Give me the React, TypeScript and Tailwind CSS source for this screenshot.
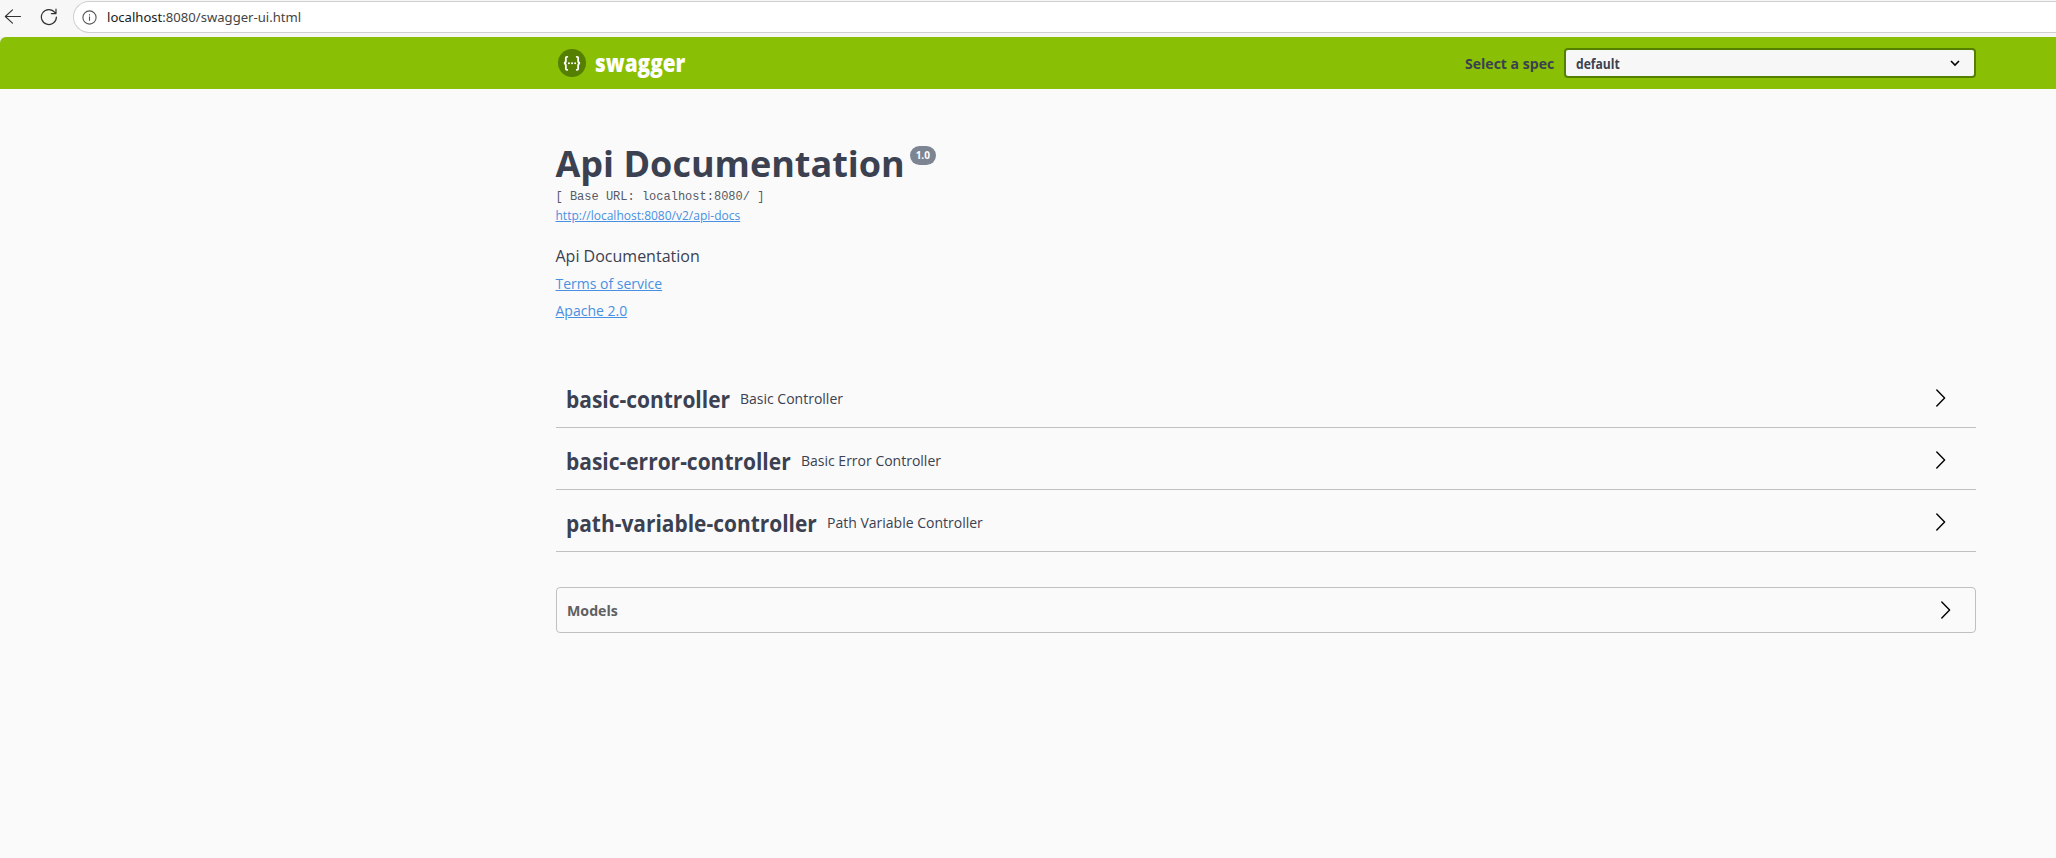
import React from "react";

const tags = [
  { name: "basic-controller", description: "Basic Controller", width: 164 },
  { name: "basic-error-controller", description: "Basic Error Controller", width: 225 },
  { name: "path-variable-controller", description: "Path Variable Controller", width: 251 },
];

/** Bold headline text squeezed or stretched to a fixed width. */
function Fitted({ text, width, className }: { text: string; width: number; className: string }) {
  const ref = React.useRef<HTMLSpanElement>(null);
  const [scale, setScale] = React.useState(1);
  React.useLayoutEffect(() => {
    if (ref.current) setScale(width / ref.current.offsetWidth);
  }, [width]);
  return (
    <span className="block shrink-0 whitespace-nowrap" style={{ width }}>
      <span
        ref={ref}
        className={`inline-block origin-left ${className}`}
        style={{ transform: `scaleX(${scale})` }}
      >
        {text}
      </span>
    </span>
  );
}

function Chevron() {
  return (
    <svg width="10" height="18" viewBox="0 0 10 18" fill="none" stroke="#000" strokeWidth="1.4" strokeLinecap="round" strokeLinejoin="round">
      <path d="M0.8 1 L8.6 9 L0.8 17" />
    </svg>
  );
}

function BrowserBar() {
  return (
    <div className="flex h-[37px] items-start bg-[#f7f7f7]">
      <svg className="ml-[4px] mt-[8px]" width="18" height="17" viewBox="0 0 18 17" fill="none" stroke="#333" strokeWidth="1.1" strokeLinecap="round" strokeLinejoin="round">
        <path d="M16.5 8.5H1.3M8.5 1.8L1.3 8.5L8.5 15.2" />
      </svg>
      <svg className="ml-[18px] mt-[8px]" width="18" height="18" viewBox="0 0 18 18" fill="none" stroke="#333" strokeWidth="1.2" strokeLinecap="round" strokeLinejoin="round">
        <path d="M16.4 9A7.5 7.5 0 1 1 14.8 4.4L15.6 5.4M16 1.2V5.6H11.4" />
      </svg>
      <div className="ml-[15px] mt-px flex h-8 flex-1 items-center rounded-l-full border border-r-0 border-[#cfcfcf] bg-white pl-2">
        <svg width="15" height="15" viewBox="0 0 15 15" fill="none" stroke="#555" strokeWidth="1.1">
          <circle cx="7.5" cy="7.5" r="6.6" />
          <path d="M7.5 6.6V10.8M7.5 4.2V5.4" />
        </svg>
        <span className="ml-2.5 whitespace-nowrap font-['Noto_Sans',sans-serif] text-[13.1px] leading-5 text-[#444]">
          <span className="text-[#1a1a1a]">localhost</span>:8080/swagger-ui.html
        </span>
      </div>
    </div>
  );
}

function Logo() {
  return (
    <div className="flex items-center">
      <svg className="ml-[2px]" width="28" height="28" viewBox="0 0 28 28" fill="none" stroke="#fff" strokeWidth="1.8" strokeLinecap="round">
        <circle cx="14" cy="14" r="14" fill="#547f00" stroke="none" />
        <path d="M9.3 7.8C7.4 7.8 7.8 9 7.9 11C8 13 7.5 14 6 14.2C7.5 14.4 8 15.5 7.9 17.4C7.8 19.6 7.4 20.8 9.3 20.8" />
        <path d="M18.7 7.8C20.6 7.8 20.2 9 20.1 11C20 13 20.5 14 22 14.2C20.5 14.4 20 15.5 20.1 17.4C20.2 19.6 20.6 20.8 18.7 20.8" />
        <path d="M10.9 14.2H11M14 14.2H14.1M17.1 14.2H17.2" strokeWidth="1.9" />
      </svg>
      <div className="ml-[9px]">
        <Fitted text="swagger" width={90} className="text-[24px] font-extrabold leading-8 text-white" />
      </div>
    </div>
  );
}

export default function App() {
  return (
    <div className="h-[858px] overflow-hidden bg-[#fafafa] font-['Open_Sans',sans-serif] text-[#3b4151]">
      <BrowserBar />
      <div className="bg-[#f0f0f0]">
        <header className="flex h-[52px] items-center rounded-tl-[6px] bg-[#89bf04] pl-[556px] pr-20">
          <Logo />
          <div className="ml-auto flex items-center">
            <Fitted text="Select a spec" width={89} className="text-[15px] font-bold leading-6" />
            <div className="ml-[10px] flex h-[30px] w-[412px] items-center justify-between rounded border-2 border-[#547f00] bg-[#f7f7f7] pl-[10px] pr-[14px]">
              <Fitted text="default" width={44} className="text-[13.5px] font-bold leading-5" />
              <svg width="10" height="7" viewBox="0 0 10 7" fill="none" stroke="#000" strokeWidth="1.6">
                <path d="M1 1L5 5L9 1" />
              </svg>
            </div>
          </div>
        </header>
      </div>
      <main className="pl-[556px] pr-20">
        <section className="-ml-[0.5px] h-[282px] pt-[50px]">
          <div className="flex h-[49px] items-start">
            <h1 className="whitespace-nowrap text-[36px] font-bold leading-[50px]">Api Documentation</h1>
            <span className="ml-[5px] mt-[7px] flex h-[19px] w-[26px] items-center justify-center rounded-full bg-[#7d8492] text-[10px] font-bold text-white">
              1.0
            </span>
          </div>
          <pre className="font-['Liberation_Mono',monospace] text-[12px] leading-[18px] text-[#555a68]">[ Base URL: localhost:8080/ ]</pre>
          <a className="mt-px block w-fit text-[12px] leading-[18px] text-[#4990e2] underline">http://localhost:8080/v2/api-docs</a>
          <p className="mt-[19px] text-[16px] leading-6">Api Documentation</p>
          <a className="mt-[2px] block w-fit text-[14px] leading-[27px] text-[#4990e2] underline">Terms of service</a>
          <a className="block w-fit text-[14px] leading-[27px] text-[#4990e2] underline">Apache 2.0</a>
        </section>
        {tags.map((tag) => (
          <div key={tag.name} className="mb-[5px] flex h-[57px] items-center border-b border-[#c0c0c2] pl-[10px] pr-[30px]">
            <Fitted text={tag.name} width={tag.width} className="text-[23px] font-bold leading-8" />
            <span className="ml-[10px] text-[14px] leading-6">{tag.description}</span>
            <span className="mb-[3px] ml-auto">
              <Chevron />
            </span>
          </div>
        ))}
        <section className="mt-[35px] flex h-[46px] items-center rounded border border-[#c0c0c2] pl-[10px] pr-[24px]">
          <Fitted text="Models" width={51} className="text-[15px] font-bold leading-6 text-[#606060]" />
          <span className="ml-auto">
            <Chevron />
          </span>
        </section>
      </main>
    </div>
  );
}
